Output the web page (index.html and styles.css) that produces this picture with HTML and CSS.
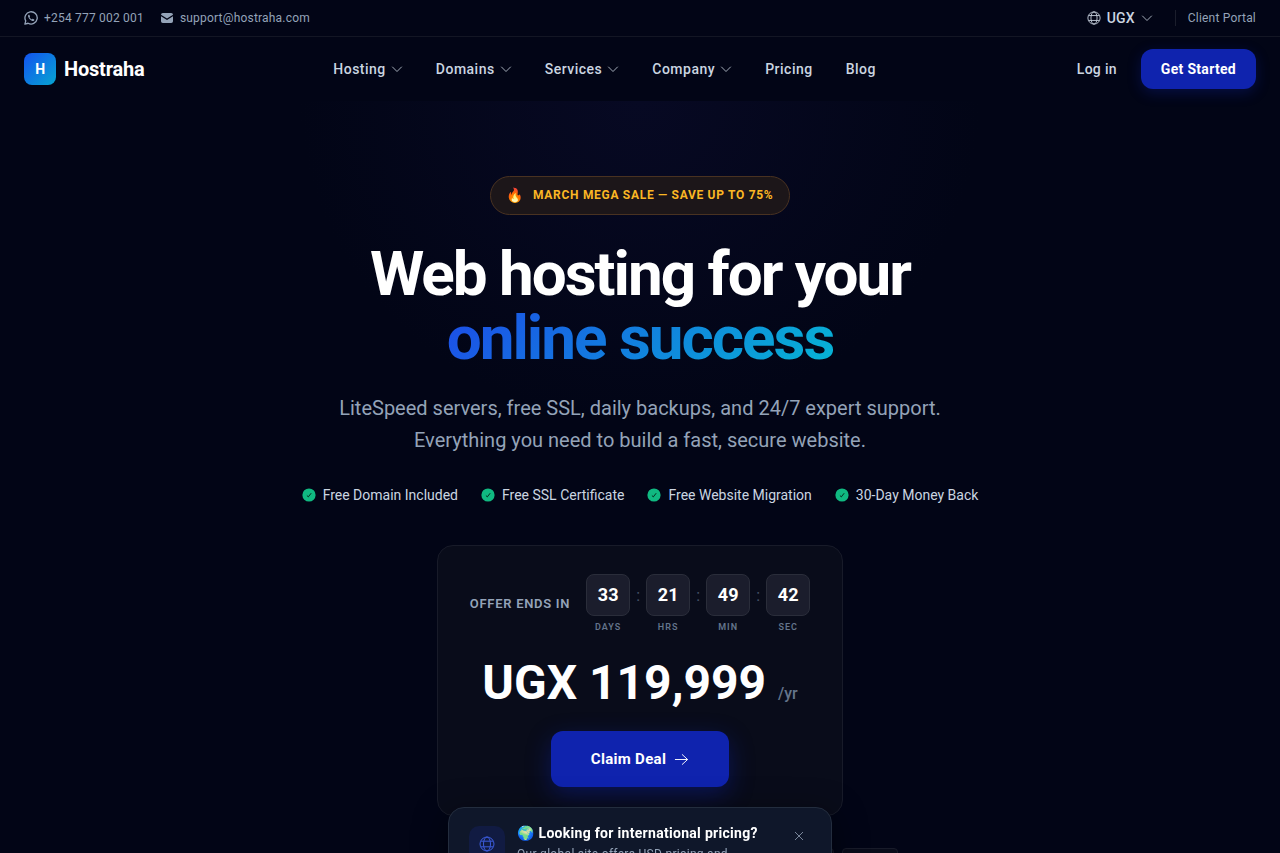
FILE: index.html
```html
<!DOCTYPE html>
<html lang="en">
<head>
    <meta charset="UTF-8">
    <meta name="viewport" content="width=device-width, initial-scale=1.0">
    <title>Hostraha</title>

    <link rel="stylesheet" href="styles.css">
</head>
<body>

    <!-- shared icons -->
    <svg class="sprite" aria-hidden="true">
        <symbol id="chevron" viewBox="0 0 12 12"><path d="M1.500 4l4.500 4.500L10.500 4" fill="none" stroke="currentColor" stroke-width=".8" stroke-linecap="round" stroke-linejoin="round"/></symbol>
        <symbol id="globe" viewBox="0 0 16 16"><g fill="none" stroke="currentColor"><circle cx="8" cy="8" r="7"/><ellipse cx="8" cy="8" rx="3.500" ry="7"/><path d="M1.800 5.200h12.400M1.800 10.800h12.400"/></g></symbol>
        <symbol id="check" viewBox="0 0 14 14"><circle cx="7" cy="7" r="6.600" fill="#10b981"/><path d="M4.900 7.500l1.400 1.400 2.900-3.700" fill="none" stroke="#04301f"/></symbol>
    </svg>

    <div class="topbar">
        <div class="contacts">
            <a href="#">
                <svg class="icon-sm" viewBox="0 0 16 16"><path d="M1 15l1-3.700A7 7 0 1 1 4.700 14z" fill="none" stroke="currentColor" stroke-width="1.500" stroke-linejoin="round"/><path d="M5.600 4.200c-.8.3-1.200 1.200-.9 2.200.7 2.300 2.600 4.200 4.900 4.900 1 .3 2-.2 2.200-1 .1-.3 0-.6-.2-.7l-1.500-.7c-.3-.1-.4 0-.6.2l-.5.6c-1.300-.5-2.200-1.400-2.700-2.500l.5-.7c.1-.2.1-.4 0-.6l-.6-1.400c-.1-.3-.3-.4-.6-.3z" fill="currentColor"/></svg>
                +254 777 002 001
            </a>
            <a href="#">
                <svg class="icon-sm" viewBox="0 0 14 14"><path d="M1 3.800Q1 2 2.800 2h8.400Q13 2 13 3.800L7 7.500z" fill="currentColor"/><path d="M1 5.300l6 3.800 6-3.800v5Q13 12 11.200 12H2.800Q1 12 1 10.300z" fill="currentColor"/></svg>
                support@hostraha.com
            </a>
        </div>
        <div class="tools">
            <button class="currency" type="button">
                <svg class="icon-sm"><use href="#globe"/></svg>
                UGX
                <svg class="icon-chevron"><use href="#chevron"/></svg>
            </button>
            <a class="portal" href="#">Client Portal</a>
        </div>
    </div>

    <header class="header">
        <a class="logo" href="#"><span class="logo-mark">H</span>Hostraha</a>
        <nav class="nav">
            <button type="button">Hosting <svg class="icon-chevron"><use href="#chevron"/></svg></button>
            <button type="button">Domains <svg class="icon-chevron"><use href="#chevron"/></svg></button>
            <button type="button">Services <svg class="icon-chevron"><use href="#chevron"/></svg></button>
            <button type="button">Company <svg class="icon-chevron"><use href="#chevron"/></svg></button>
            <a href="#">Pricing</a>
            <a href="#">Blog</a>
        </nav>
        <div class="account">
            <a class="login" href="#">Log in</a>
            <a class="start" href="#">Get Started</a>
        </div>
    </header>

    <main class="hero">
        <div class="sale"><span class="emoji">🔥</span>MARCH MEGA SALE — SAVE UP TO 75%</div>

        <h1>Web hosting for your<br><span class="accent">online success</span></h1>

        <p class="lead">LiteSpeed servers, free SSL, daily backups, and 24/7 expert support. Everything you need to build a fast, secure website.</p>

        <ul class="features">
            <li><svg class="icon-sm"><use href="#check"/></svg>Free Domain Included</li>
            <li><svg class="icon-sm"><use href="#check"/></svg>Free SSL Certificate</li>
            <li><svg class="icon-sm"><use href="#check"/></svg>Free Website Migration</li>
            <li><svg class="icon-sm"><use href="#check"/></svg>30-Day Money Back</li>
        </ul>

        <section class="deal">
            <div class="timer">
                <span class="timer-label">OFFER ENDS IN</span>
                <div class="clock">
                    <div class="unit"><b>33</b><small>DAYS</small></div>
                    <span class="colon">:</span>
                    <div class="unit"><b>21</b><small>HRS</small></div>
                    <span class="colon">:</span>
                    <div class="unit"><b>49</b><small>MIN</small></div>
                    <span class="colon">:</span>
                    <div class="unit"><b>42</b><small>SEC</small></div>
                </div>
            </div>
            <div class="price">UGX 119,999 <span class="period">/yr</span></div>
            <a class="claim" href="#">
                Claim Deal
                <svg class="icon-arrow" viewBox="0 0 16 16"><path d="M1 8h13.500M8.500 2.500L14.500 8l-6 5.500" fill="none" stroke="currentColor"/></svg>
            </a>
        </section>

        <div class="payments">
            <span></span><span></span><span></span><span></span><span></span><span></span>
        </div>
    </main>

    <aside class="popup">
        <div class="popup-icon"><svg><use href="#globe"/></svg></div>
        <div class="popup-text">
            <h2>🌍 Looking for international pricing?</h2>
            <p>Our global site offers USD pricing and</p>
        </div>
        <button class="close" type="button" aria-label="Close">
            <svg viewBox="0 0 10 10"><path d="M1 1l8 8M9 1L1 9" stroke="currentColor" stroke-width=".8"/></svg>
        </button>
    </aside>

</body>
</html>
```
FILE: styles.css
```css
* {
    box-sizing: border-box;
}

body {
    margin: 0;
    background-color: #020516;
    color: white;
    font-family: Roboto, "Noto Color Emoji", sans-serif;
    font-size: 14px;
    line-height: 20px;
}

a {
    color: inherit;
    text-decoration: none;
}

button {
    padding: 0;
    border: none;
    background: none;
    color: inherit;
    font: inherit;
    letter-spacing: inherit;
    cursor: pointer;
}

svg {
    flex-shrink: 0;
}

.sprite {
    position: absolute;
    width: 0;
    height: 0;
}

.icon-sm {
    width: 14px;
    height: 14px;
}

.icon-chevron {
    width: 12px;
    height: 12px;
}

.topbar {
    display: flex;
    justify-content: space-between;
    align-items: center;
    height: 37px;
    padding: 0 24px;
    border-bottom: 1px solid #131624;
    color: #94a3b8;
    font-size: 12px;
    letter-spacing: 0.2px;
}

.contacts,
.tools {
    display: flex;
    align-items: center;
    gap: 16px;
}

.contacts a {
    display: flex;
    align-items: center;
    gap: 6px;
}

.tools {
    gap: 22px;
}

.currency {
    display: flex;
    align-items: center;
    gap: 6px;
    color: #cbd5e1;
    font-size: 14px;
    font-weight: 500;
}

.portal {
    padding-left: 12px;
    border-left: 1px solid #1b1e2c;
    line-height: 16px;
}

.header {
    display: flex;
    justify-content: space-between;
    align-items: center;
    height: 64px;
    padding: 0 24px;
}

.logo {
    display: flex;
    align-items: center;
    gap: 8px;
    font-size: 20px;
    font-weight: 700;
    letter-spacing: -0.2px;
}

.logo-mark {
    display: flex;
    justify-content: center;
    align-items: center;
    width: 32px;
    height: 32px;
    border-radius: 8px;
    background: linear-gradient(135deg, #1353f0, #06a5d0);
    font-size: 14px;
}

.nav {
    display: flex;
    gap: 33px;
    color: #cbd5e1;
    font-weight: 500;
    letter-spacing: 0.5px;
}

.nav button {
    display: flex;
    align-items: center;
    gap: 5px;
}

.account {
    display: flex;
    align-items: center;
    gap: 12px;
}

.login {
    padding: 0 12px;
    color: #cbd5e1;
    font-weight: 500;
    letter-spacing: 0.3px;
}

.start {
    padding: 10px 20px;
    border-radius: 12px;
    background-color: #0f23ae;
    box-shadow: 0 4px 14px rgba(15, 35, 174, 0.3);
    font-weight: 700;
    letter-spacing: 0.3px;
}

.hero {
    display: flex;
    flex-direction: column;
    align-items: center;
    padding: 75px 24px 40px;
    background: radial-gradient(ellipse 340px 320px at 50% 0, #070923, #020516);
    text-align: center;
}

.sale {
    display: flex;
    align-items: center;
    gap: 9px;
    padding: 8px 16px 9px;
    border: 1px solid #493221;
    border-radius: 20px;
    background-color: #1c1619;
    color: #fbb724;
    font-size: 12px;
    font-weight: 700;
    letter-spacing: 0.7px;
}

.emoji {
    font-size: 14px;
    letter-spacing: 0;
}

h1 {
    margin: 27px 0 0;
    font-size: 62px;
    line-height: 64px;
    font-weight: 700;
    letter-spacing: -2px;
}

.accent {
    background: linear-gradient(135deg, #1d4ae8, #06b6d4);
    background-clip: text;
    -webkit-background-clip: text;
    color: transparent;
}

.lead {
    max-width: 640px;
    margin: 22px 0 0;
    color: #94a3b8;
    font-size: 20px;
    line-height: 32px;
}

.features {
    display: flex;
    gap: 23px;
    margin: 29px 0 0;
    padding: 0;
    color: #cbd5e1;
    list-style: none;
}

.features li {
    display: flex;
    align-items: center;
    gap: 7px;
}

.deal {
    margin-top: 40px;
    padding: 28px 32px;
    border: 1px solid #181b29;
    border-radius: 16px;
    background-color: #090c1a;
}

.timer {
    display: flex;
    align-items: center;
    gap: 16px;
}

.timer-label {
    color: #94a3b8;
    font-size: 13px;
    font-weight: 600;
    letter-spacing: 0.7px;
}

.clock {
    display: flex;
}

.unit b {
    display: block;
    width: 44px;
    height: 42px;
    border: 1px solid #2a2d3a;
    border-radius: 8px;
    background-color: #1b1d2c;
    font-size: 18px;
    line-height: 40px;
}

.unit small {
    display: block;
    margin-top: 4px;
    color: #64748b;
    font-size: 9px;
    font-weight: 600;
    line-height: 14px;
    letter-spacing: 1px;
}

.colon {
    width: 16px;
    color: #475569;
    font-size: 16px;
    line-height: 44px;
}

.price {
    margin-top: 21px;
    font-size: 48px;
    font-weight: 700;
    line-height: 56px;
}

.period {
    color: #64748b;
    font-size: 16px;
    font-weight: 500;
    line-height: 20px;
}

.claim {
    display: inline-flex;
    align-items: center;
    gap: 8px;
    margin-top: 20px;
    padding: 18px 40px;
    border-radius: 12px;
    background-color: #0f23ae;
    box-shadow: 0 8px 24px rgba(15, 35, 174, 0.4);
    font-size: 15px;
    font-weight: 700;
    letter-spacing: 0.3px;
    vertical-align: top;
}

.icon-arrow {
    width: 15px;
    height: 15px;
}

.payments {
    display: flex;
    gap: 8px;
    margin-top: 32px;
    padding-left: 140px;
}

.payments span {
    width: 56px;
    height: 32px;
    border: 1px solid #181b29;
    border-radius: 4px;
    background-color: #090c1a;
}

.popup {
    position: fixed;
    top: calc(100vh - 46px);
    left: 50%;
    display: flex;
    gap: 12px;
    width: 384px;
    padding: 15px 20px;
    border: 1px solid #232d3e;
    border-radius: 16px;
    background-color: #0f172a;
    box-shadow: 0 8px 32px rgba(0, 0, 0, 0.5);
    transform: translateX(-50%);
}

.popup-icon {
    display: flex;
    justify-content: center;
    align-items: center;
    width: 36px;
    height: 36px;
    margin-top: 3px;
    border-radius: 10px;
    background-color: #111b42;
    color: #3b5bdb;
}

.popup-icon svg {
    width: 16px;
    height: 16px;
}

.popup-text {
    flex: 1;
    letter-spacing: 0.3px;
}

.popup h2 {
    margin: 0;
    font-size: 14px;
    line-height: 20px;
}

.popup p {
    margin: 2px 0 0;
    color: #94a3b8;
    font-size: 12px;
    line-height: 18px;
}

.close {
    align-self: flex-start;
    width: 24px;
    height: 26px;
    color: #94a3b8;
}

.close svg {
    width: 10px;
    height: 10px;
}
```
